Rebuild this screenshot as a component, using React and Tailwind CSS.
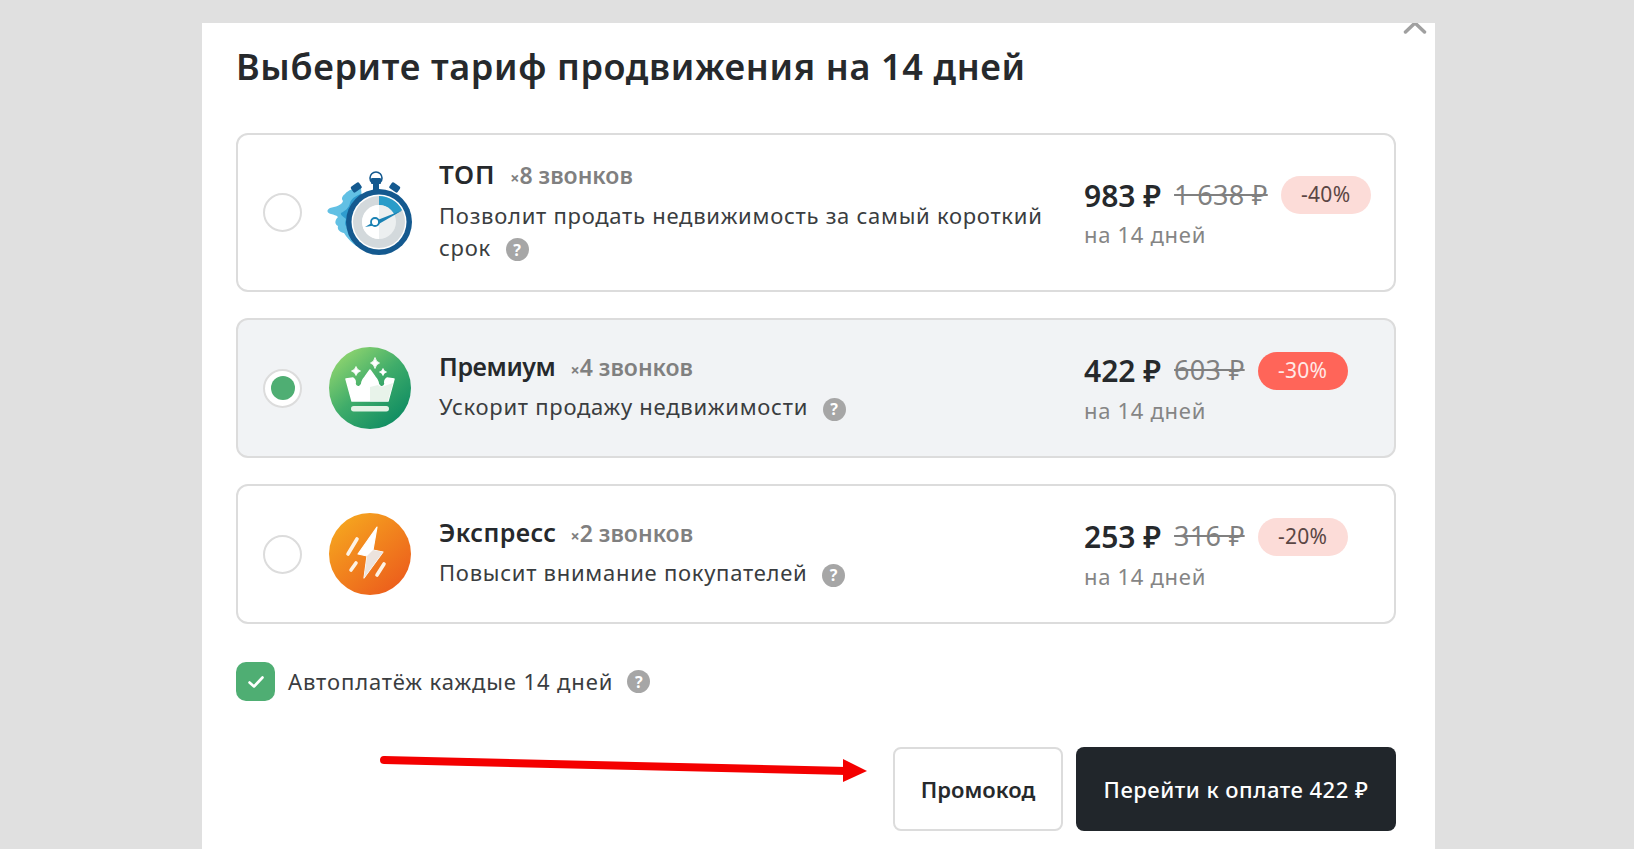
const font = { fontFamily: '"Noto Sans", sans-serif' };

function Help({ className = '' }) {
  return (
    <span className={`inline-flex w-[23px] h-[23px] rounded-full bg-[#a6a6a6] text-white text-[16px] font-bold items-center justify-center align-middle leading-none ${className}`}>
      ?
    </span>
  );
}

function Stopwatch() {
  return (
    <svg width="86" height="86" viewBox="0 0 86 86" className="shrink-0">
      <path d="M34 18 C27 18 21 20 18 24 C15 26 14 29 16 31 C15 35 8 37 3 38 C-1 40 0 43 4 44 C7 45 9 45 11 47 C8 50 7 54 11 56 C10 60 13 62 17 63 C22 71 30 78 40 81 Z" fill="#62c0e4" />
      <path d="M34 24 C28 26 24 29 23 33 C22 38 18 41 14 43 C13 45 17 47 19 49 C18 52 17 56 21 57 C24 64 30 72 38 76 Z" fill="#2f9ccf" />
      <circle cx="49" cy="8" r="6" fill="none" stroke="#14598f" strokeWidth="1.6" />
      <rect x="44" y="8" width="10" height="6" rx="1" fill="#14598f" />
      <rect x="46" y="12" width="6" height="8" fill="#14598f" />
      <rect x="24" y="14" width="10" height="7" rx="1.5" fill="#14598f" transform="rotate(-35 29 17)" />
      <rect x="63" y="14" width="10" height="7" rx="1.5" fill="#14598f" transform="rotate(35 68 17)" />
      <circle cx="52" cy="52" r="33" fill="#14598f" />
      <circle cx="52" cy="52" r="27.5" fill="#ffffff" />
      <circle cx="52" cy="52" r="26" fill="#d3d9dc" />
      <path d="M52 26 A26 26 0 0 1 75 40 L67 45 A17 17 0 0 0 52 35 Z" fill="#2a9cc9" />
      <circle cx="52" cy="52" r="17" fill="#eceff0" />
      <path d="M52 35 A17 17 0 0 0 52 69 Z" fill="#ffffff" />
      <path d="M38 57 L48 51 L76 40 L50 55 Z" fill="#1a82b4" />
      <circle cx="48" cy="52" r="4" fill="#ffffff" stroke="#1a82b4" strokeWidth="1.8" />
    </svg>
  );
}

function Crown() {
  return (
    <svg width="82" height="82" viewBox="0 0 82 82" className="shrink-0">
      <defs>
        <linearGradient id="green" x1="0.1" y1="0.05" x2="0.85" y2="0.95">
          <stop offset="0" stopColor="#96d86f" />
          <stop offset="0.5" stopColor="#3fac6a" />
          <stop offset="1" stopColor="#0c8a62" />
        </linearGradient>
      </defs>
      <circle cx="41" cy="41" r="41" fill="url(#green)" />
      <path d="M17 32 L24 31 Q27 33 26 37 Q28 41 31 39 Q33 38 33 35 Q34 32 36 30 L41 23 L46 30 Q48 32 49 35 Q49 38 51 39 Q54 41 56 37 Q55 33 58 31 L65 32 L59 54 L23 54 Z" fill="#ffffff" stroke="#ffffff" strokeWidth="1.5" strokeLinejoin="round" />
      <path d="M41 40 L49 38 Q51 40 54 39.5 L64 36 L59 54 L41 54 Z" fill="#e8f3ea" />
      <rect x="22" y="59" width="38" height="5.5" rx="2.7" fill="#e3f2e5" />
      <path d="M46 10.5 Q47 15 50.5 16 Q47 17 46 21.5 Q45 17 41.5 16 Q45 15 46 10.5 Z M27 19.5 Q28 23 31.5 24 Q28 25 27 28.5 Q26 25 22.5 24 Q26 23 27 19.5 Z M54 21.5 Q54.7 24.3 57.5 25 Q54.7 25.7 54 28.5 Q53.3 25.7 50.5 25 Q53.3 24.3 54 21.5 Z" fill="#ffffff" stroke="#ffffff" strokeWidth="0.8" strokeLinejoin="round" />
    </svg>
  );
}

function Bolt() {
  return (
    <svg width="82" height="82" viewBox="0 0 82 82" className="shrink-0">
      <defs>
        <linearGradient id="orange" x1="0.1" y1="0.05" x2="0.85" y2="0.95">
          <stop offset="0" stopColor="#f6a81f" />
          <stop offset="1" stopColor="#ec5c1c" />
        </linearGradient>
      </defs>
      <circle cx="41" cy="41" r="41" fill="url(#orange)" />
      <path d="M48 14 L29 41 L38 43 L35 65 L54 39 L44 37 Z" fill="#ffffff" stroke="#ffffff" strokeWidth="1.2" strokeLinejoin="round" />
      <path d="M44 37 L54 39 L35 65 L38 43 Z" fill="#ece3dd" />
      <path d="M28 26 L19 41 M27 50 L22 57 M55 51 L48 62" stroke="#fdf2e4" strokeWidth="3.6" strokeLinecap="round" />
    </svg>
  );
}

const plans = [
  {
    name: 'ТОП', calls: '8 звонков', text: 'Позволит продать недвижимость за самый короткий срок',
    price: '983 ₽', old: '1 638 ₽', off: '-40%', icon: <Stopwatch />, height: 'h-[159px]',
    nameClass: 'text-[26px] tracking-[0.8px]', callsGap: 'ml-[15px]',
  },
  {
    name: 'Премиум', calls: '4 звонков', text: 'Ускорит продажу недвижимости',
    price: '422 ₽', old: '603 ₽', off: '-30%', icon: <Crown />, height: 'h-[140px]', selected: true,
    nameClass: 'text-[25px] -tracking-[0.4px]', callsGap: 'ml-[15px]',
  },
  {
    name: 'Экспресс', calls: '2 звонков', text: 'Повысит внимание покупателей',
    price: '253 ₽', old: '316 ₽', off: '-20%', icon: <Bolt />, height: 'h-[140px]',
    nameClass: 'text-[25px] tracking-[0.4px]', callsGap: 'ml-[14px]',
  },
];

function PlanCard({ plan }) {
  return (
    <div className={`flex items-center border-2 border-[#dcdcdc] rounded-xl pl-[25px] ${plan.height} ${plan.selected ? 'bg-[#f1f3f5]' : 'bg-white'}`}>
      <div className="w-[39px] h-[39px] rounded-full border-2 border-[#dcdcdc] bg-white flex items-center justify-center shrink-0">
        {plan.selected && <div className="w-[24px] h-[24px] rounded-full bg-[#4fae73]" />}
      </div>
      <div className="w-[82px] ml-[27px] flex justify-center shrink-0">{plan.icon}</div>
      <div className="w-[645px] ml-[28px] shrink-0 -mt-[5px]">
        <div className="flex items-baseline">
          <span className={`font-semibold text-[#26292c] leading-[34px] ${plan.nameClass}`}>{plan.name}</span>
          <span className={`text-[23px] font-semibold text-[#808080] ${plan.callsGap}`}>
            <span className="text-[16px] font-bold">×</span>
            {plan.calls}
          </span>
        </div>
        <div className="mt-[6px] text-[22px] leading-[32px] text-[#3a3d40] tracking-[0.73px] w-[620px]">
          {plan.text}
          <Help className="ml-[15px]" />
        </div>
      </div>
      <div className="shrink-0 mt-[2px]">
        <div className="flex items-center h-[38px]">
          <span className="text-[30px] font-semibold text-[#26292c]">{plan.price}</span>
          <span className="ml-[13px] text-[27px] tracking-[0.3px] text-[#808080] line-through">{plan.old}</span>
          <span className={`ml-[13px] w-[90px] h-[38px] rounded-full flex items-center justify-center text-[21px] tracking-[0.3px] ${plan.selected ? 'bg-[#ff6559] text-[#ffe9e6]' : 'bg-[#fcdcd8] text-[#5a4644]'}`}>
            {plan.off}
          </span>
        </div>
        <div className="mt-[4px] text-[22px] text-[#858585] tracking-[0.7px]">на 14 дней</div>
      </div>
    </div>
  );
}

export default function App() {
  return (
    <div className="relative h-screen overflow-hidden bg-[#e0e0e0] pt-[23px] pl-[202px]" style={font}>
      <div className="relative w-[1233px] h-[826px] bg-white pl-[34px] pr-[39px] overflow-hidden">
        {/* close icon, cut off by the crop */}
        <svg width="24" height="12" viewBox="0 0 24 12" className="absolute right-[8px] top-0">
          <path d="M2.5 9 L12 0 L21.5 9" fill="none" stroke="#a0a0a0" strokeWidth="3.5" strokeLinecap="round" />
        </svg>

        <h1 className="pt-[19px] text-[36px] leading-[50px] font-semibold text-[#26292c] tracking-[0.65px]">
          Выберите тариф продвижения на 14 дней
        </h1>

        <div className="mt-[41px] flex flex-col gap-[26px]">
          {plans.map((plan) => (
            <PlanCard key={plan.name} plan={plan} />
          ))}
        </div>

        <div className="mt-[38px] flex items-center">
          <div className="w-[39px] h-[39px] rounded-[10px] bg-[#4fae73] flex items-center justify-center">
            <svg width="18" height="14" viewBox="0 0 18 14">
              <path d="M2.5 7.5 L7 11.5 L15.5 2.5" fill="none" stroke="#fff" strokeWidth="2.6" strokeLinecap="round" strokeLinejoin="round" />
            </svg>
          </div>
          <span className="ml-[13px] text-[22px] text-[#3a3d40] tracking-[0.9px]">Автоплатёж каждые 14 дней</span>
          <Help className="ml-[14px]" />
        </div>

        <div className="mt-[46px] flex justify-end gap-[13px]">
          <button className="w-[170px] h-[84px] rounded-lg border-2 border-[#dcdcdc] bg-white text-[22px] font-semibold text-[#26292c]">
            Промокод
          </button>
          <button className="w-[320px] h-[84px] rounded-lg bg-[#21262b] text-[22px] font-medium tracking-[0.5px] text-white">
            Перейти к оплате 422 ₽
          </button>
        </div>
      </div>

      {/* red annotation arrow */}
      <svg width="500" height="40" viewBox="0 0 500 40" className="absolute left-[375px] top-[745px]">
        <path d="M9 15 L472 26" stroke="#f40000" strokeWidth="8" strokeLinecap="round" />
        <path d="M468 14 L492 26 L468 37 Z" fill="#f40000" />
      </svg>
    </div>
  );
}
